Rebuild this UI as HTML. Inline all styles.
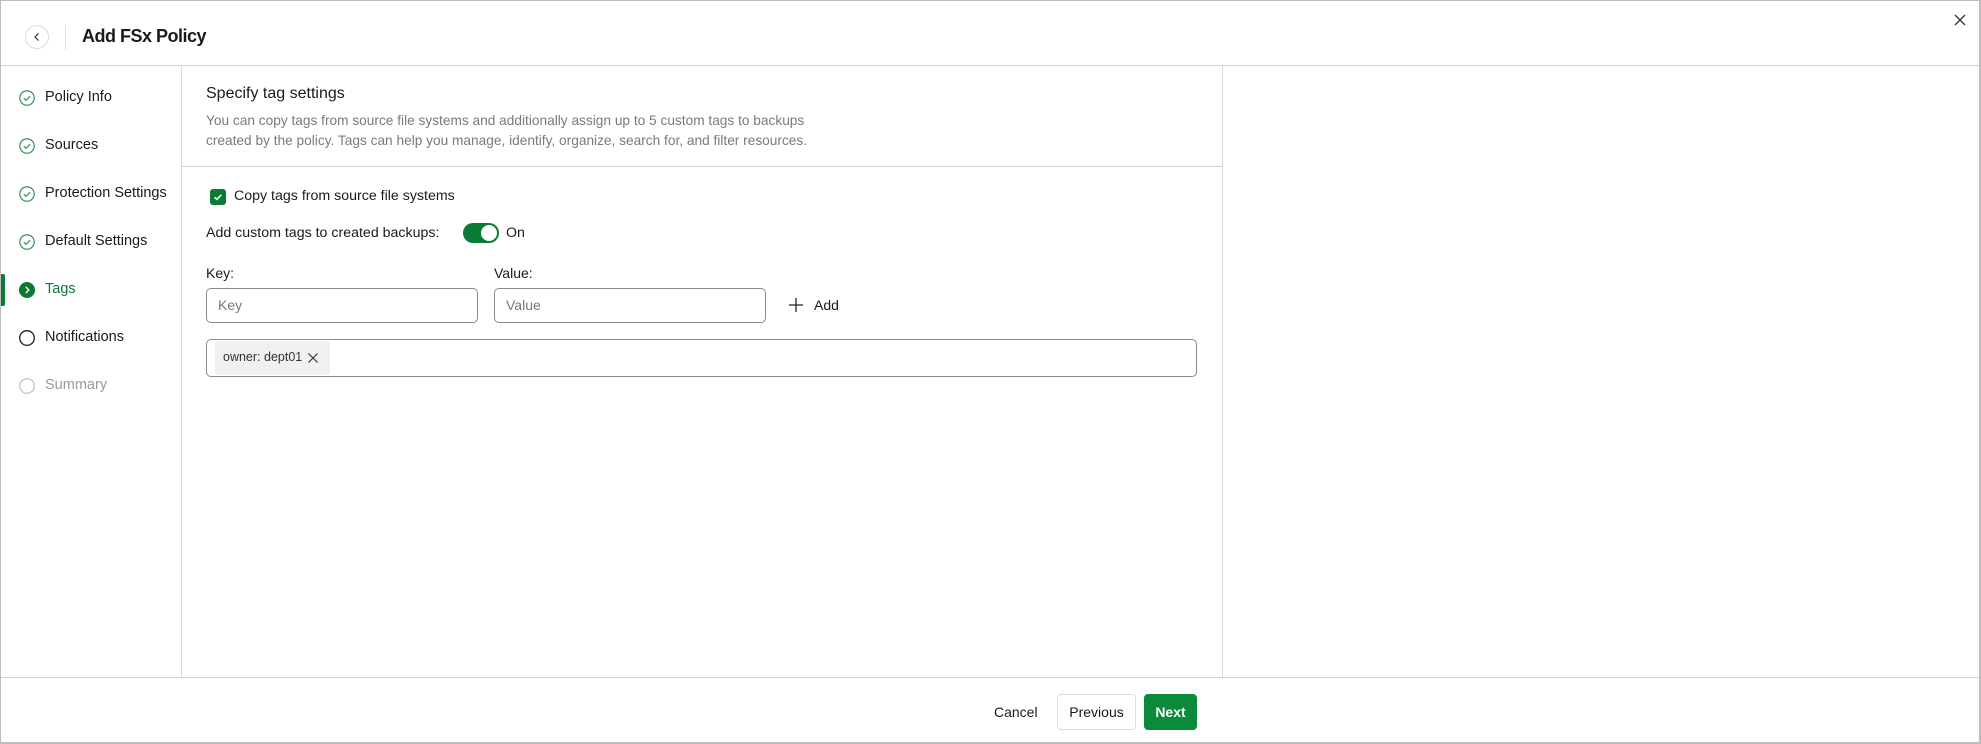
<!DOCTYPE html>
<html><head><meta charset="utf-8"><style>
*{box-sizing:border-box;margin:0;padding:0}
body{width:1981px;height:744px;background:#fff;font-family:"Liberation Sans",sans-serif;color:#1a1a1a;position:relative;overflow:hidden}
.abs{position:absolute}
.frame{left:0;top:0;width:1981px;height:744px;border:1px solid #bdbdbd;border-right:2px solid #bdbdbd;border-bottom:2px solid #bdbdbd}
.t{position:absolute;white-space:nowrap}
.item{font-size:14.5px;left:45px}
</style></head><body>
<div class="abs frame"></div>
<div class="abs" style="left:25px;top:25px;width:24px;height:24px;border:1px solid #ddd;border-radius:50%"></div>
<svg class="abs" style="left:31px;top:31px" width="12" height="12" viewBox="0 0 12 12"><path d="M7.5 2.5L4 6l3.5 3.5" fill="none" stroke="#333" stroke-width="1.2"/></svg>
<div class="abs" style="left:65px;top:25px;width:1px;height:25px;background:#ddd"></div>
<div class="t" style="left:82px;top:26px;font-size:18px;font-weight:bold;letter-spacing:-0.5px">Add FSx Policy</div>
<svg class="abs" style="left:1953px;top:13px" width="14" height="14" viewBox="0 0 14 14"><path d="M2 2L12 12M12 2L2 12" stroke="#333" stroke-width="1.3"/></svg>
<div class="abs" style="left:1px;top:65px;width:1978px;height:1px;background:#d0d0d0"></div>
<div class="abs" style="left:181px;top:65px;width:1px;height:612px;background:#d8d8d8"></div>
<div class="abs" style="left:1222px;top:65px;width:1px;height:612px;background:#d8d8d8"></div>
<svg class="abs" style="left:19px;top:90px" width="16" height="320" viewBox="0 0 16 320">
<g fill="none" stroke="#1a8a3f" stroke-width="1.1">
<circle cx="8" cy="8" r="7.2"/><path d="M4.8 8.2l2.2 2.2 4-4.2"/>
<circle cx="8" cy="56" r="7.2"/><path d="M4.8 56.2l2.2 2.2 4-4.2"/>
<circle cx="8" cy="104" r="7.2"/><path d="M4.8 104.2l2.2 2.2 4-4.2"/>
<circle cx="8" cy="152" r="7.2"/><path d="M4.8 152.2l2.2 2.2 4-4.2"/>
</g>
<circle cx="8" cy="200" r="8" fill="#0b7a35"/><path d="M6.8 196.8l3 3.2-3 3.2" fill="none" stroke="#fff" stroke-width="1.3"/>
<circle cx="8" cy="248" r="7.3" fill="none" stroke="#1a1a1a" stroke-width="1.3"/>
<circle cx="8" cy="296" r="7.3" fill="none" stroke="#b8b8b8" stroke-width="1.1"/>
</svg>
<div class="abs" style="left:1px;top:274px;width:4px;height:32px;background:#0b7a35;border-radius:0 2px 2px 0"></div>
<div class="t item" style="top:89px">Policy Info</div>
<div class="t item" style="top:137px">Sources</div>
<div class="t item" style="top:185px">Protection Settings</div>
<div class="t item" style="top:233px">Default Settings</div>
<div class="t item" style="top:281px;color:#0b7a35">Tags</div>
<div class="t item" style="top:329px">Notifications</div>
<div class="t item" style="top:377px;color:#9a9a9a">Summary</div>
<div class="t" style="left:206px;top:85px;font-size:16px">Specify tag settings</div>
<div class="t" style="left:206px;top:111px;font-size:13.7px;color:#7a7a7a;line-height:20px">You can copy tags from source file systems and additionally assign up to 5 custom tags to backups<br>created by the policy. Tags can help you manage, identify, organize, search for, and filter resources.</div>
<div class="abs" style="left:182px;top:166px;width:1040px;height:1px;background:#d0d0d0"></div>
<div class="abs" style="left:210px;top:189px;width:16px;height:16px;background:#0b7a35;border-radius:3px"></div>
<svg class="abs" style="left:210px;top:189px" width="16" height="16"><path d="M4.5 8.2l2.3 2.2 4.5-4.6" fill="none" stroke="#fff" stroke-width="1.5"/></svg>
<div class="t" style="left:234px;top:188px;font-size:14.2px">Copy tags from source file systems</div>
<div class="t" style="left:206px;top:225px;font-size:14.2px">Add custom tags to created backups:</div>
<div class="abs" style="left:463px;top:223px;width:36px;height:20px;background:#0b7a35;border-radius:10px"></div>
<div class="abs" style="left:481px;top:225px;width:16px;height:16px;background:#fff;border-radius:50%"></div>
<div class="t" style="left:506px;top:225px;font-size:14.2px">On</div>
<div class="t" style="left:206px;top:265px;font-size:14px">Key:</div>
<div class="t" style="left:494px;top:265px;font-size:14px">Value:</div>
<div class="abs" style="left:206px;top:288px;width:272px;height:35px;border:1px solid #8a8a8a;border-radius:5px"></div>
<div class="abs" style="left:494px;top:288px;width:272px;height:35px;border:1px solid #8a8a8a;border-radius:5px"></div>
<div class="t" style="left:218px;top:297px;font-size:14px;color:#777">Key</div>
<div class="t" style="left:506px;top:297px;font-size:14px;color:#777">Value</div>
<svg class="abs" style="left:788px;top:297px" width="16" height="16"><path d="M8 1v14M1 8h14" stroke="#222" stroke-width="1.3"/></svg>
<div class="t" style="left:814px;top:297px;font-size:14px">Add</div>
<div class="abs" style="left:206px;top:339px;width:991px;height:38px;border:1px solid #8a8a8a;border-radius:5px"></div>
<div class="abs" style="left:215px;top:341px;width:115px;height:34px;background:#f0f0f0;border-radius:3px"></div>
<div class="t" style="left:223px;top:350px;font-size:12.5px;color:#333">owner: dept01</div>
<svg class="abs" style="left:308px;top:353px" width="10" height="10"><path d="M0.5 0.5l9 9M9.5 0.5l-9 9" stroke="#333" stroke-width="1.2"/></svg>
<div class="abs" style="left:1px;top:677px;width:1978px;height:1px;background:#d0d0d0"></div>
<div class="t" style="left:994px;top:704px;font-size:14px">Cancel</div>
<div class="abs" style="left:1057px;top:694px;width:79px;height:36px;border:1px solid #dcdcdc;border-radius:4px;font-size:14px;text-align:center;line-height:34px">Previous</div>
<div class="abs" style="left:1144px;top:694px;width:53px;height:36px;background:#0b8a3c;border-radius:4px;font-size:14px;text-align:center;line-height:36px;color:#fff;font-weight:bold">Next</div>
</body></html>
